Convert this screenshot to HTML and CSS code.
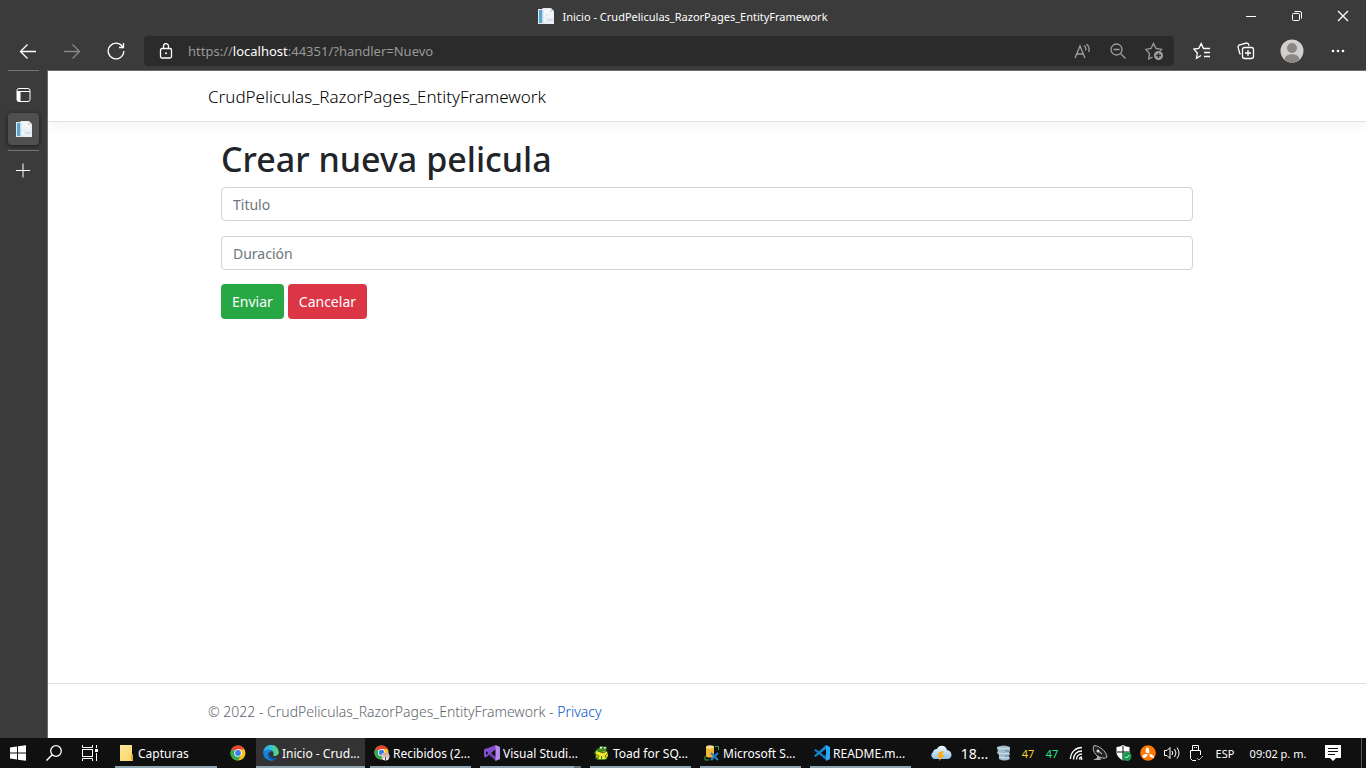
FILE: index.html
```html
<!DOCTYPE html>
<html lang="es">
<head>
<meta charset="utf-8">
<meta name="viewport" content="width=device-width, initial-scale=1">
<title>Inicio - CrudPeliculas_RazorPages_EntityFramework</title>
<link rel="stylesheet" href="styles.css">
</head>
<body>
<svg class="defs" aria-hidden="true">
  <defs>
    <linearGradient id="edgeTop" x1="0" y1="0" x2="1" y2="0"><stop offset="0" stop-color="#2fa8ea"/><stop offset=".5" stop-color="#35c1d0"/><stop offset="1" stop-color="#62d96b"/></linearGradient>
    <linearGradient id="cloud" x1="0" y1="0" x2="0" y2="1"><stop offset="0" stop-color="#f3faff"/><stop offset="1" stop-color="#8ec4ee"/></linearGradient>
    <linearGradient id="folder" x1="0" y1="0" x2="1" y2="1"><stop offset="0" stop-color="#ffe79a"/><stop offset="1" stop-color="#f9d568"/></linearGradient>
    <symbol id="favicon" viewBox="0 0 16 16">
      <path d="M0 1h4l1-1h8l3 3v13H0z" fill="#e6eaee"/>
      <path d="M1 2h3v13H1z" fill="#58a5d2"/>
      <path d="M4 2h1.500v13H4z" fill="#b7dcf0"/>
      <path d="M5.500 1H12l3 3v10H5.500z" fill="#f4f5f6"/>
      <path d="M12 1v3h3" fill="#d2d7dc"/>
      <path d="M7 7h5M7 10h4" stroke="#dde2e7"/>
      <path d="M8 9h8v7H8z" fill="#e8eef5"/>
      <path d="M9 12h6" stroke="#c3cfdb"/>
    </symbol>
    <symbol id="chrome" viewBox="0 0 16 16">
      <circle cx="8" cy="8" r="7.500" fill="#fbc116"/>
      <path d="M8 8 1.500 4.250A7.500 7.500 0 0 1 14.500 4.250H8z" fill="#ea4335"/>
      <path d="M1.500 4.250A7.500 7.500 0 0 0 8 15.500L11.200 9.900 8 8z" fill="#34a853"/>
      <circle cx="8" cy="8" r="3.800" fill="#fff"/>
      <circle cx="8" cy="8" r="2.900" fill="#3b7ded"/>
    </symbol>
  </defs>
</svg>
<div class="window">
  <header class="titlebar">
    <span></span>
    <div class="caption"><svg class="i16"><use href="#favicon"/></svg><span>Inicio - CrudPeliculas_RazorPages_EntityFramework</span></div>
    <div class="controls">
      <button aria-label="Minimizar"><svg class="i12" viewBox="0 0 12 12"><path d="M1 6.500h10" class="w"/></svg></button>
      <button aria-label="Restaurar"><svg class="i12" viewBox="0 0 12 12"><rect x="1.500" y="3.500" width="7" height="7" rx="1" class="w"/><path d="M3.500 1.500H9a1.500 1.500 0 0 1 1.500 1.500v5.500" class="w"/></svg></button>
      <button aria-label="Cerrar"><svg class="i12" viewBox="0 0 12 12"><path d="m1 1 10 10M11 1 1 11" class="w bold"/></svg></button>
    </div>
  </header>

  <nav class="toolbar" aria-label="Navegación">
    <button aria-label="Atrás"><svg class="i18" viewBox="0 0 18 18"><path d="M17 9.500H1.500M8.500 2.500l-7 7 7 7" class="w bold"/></svg></button>
    <button aria-label="Adelante"><svg class="i18 dim" viewBox="0 0 18 18"><path d="M1 9.500h15.500M9.500 2.500l7 7-7 7" class="w bold"/></svg></button>
    <button aria-label="Actualizar"><svg class="i18" viewBox="0 0 18 18"><path d="M15.800 5.200A7.800 7.800 0 1 0 16.800 9M16.500 1v4.500H12" class="w bold"/></svg></button>
    <div class="address">
      <button class="lock" aria-label="Información del sitio"><svg class="i16" viewBox="0 0 16 16"><rect x="2.500" y="5.500" width="11" height="9.500" rx="1.500" class="w bold"/><path d="M5.500 5.500V3.200a2.500 2.500 0 0 1 5 0v2.300" class="w bold"/><circle cx="8" cy="10.300" r="1" fill="#fff"/></svg></button>
      <div class="url" role="textbox" aria-label="Dirección" contenteditable="true" spellcheck="false">https://<b>localhost</b>:44351/?handler=Nuevo</div>
      <button aria-label="Leer en voz alta"><svg class="i16 soft" viewBox="0 0 16 16"><path d="m1 15 5-12 5 12M2.800 11h6.400M10 2.500q2.500 2 1.500 5M12.500 1q4 3.500 2 8" class="w bold"/></svg></button>
      <button aria-label="Zoom"><svg class="i16 soft" viewBox="0 0 16 16"><circle cx="6.500" cy="6.500" r="5.500" class="w bold"/><path d="m10.500 10.500 5 5M3.500 6.500h6" class="w bold"/></svg></button>
      <button aria-label="Agregar a favoritos"><svg class="i18 soft" viewBox="0 0 18 18"><path d="m7.500 15-3.800 2 .8-5.300L.8 7.400 6 6.500 8.500 1.500 11 6.500l5.500.9-1.500 1.500" class="w bold"/><circle cx="13.500" cy="13.500" r="4.500" fill="#fff"/><path d="M13.500 11v5M11 13.500h5" stroke="#2b2b2b" stroke-width="1.300"/></svg></button>
    </div>
    <button class="after" aria-label="Favoritos"><svg class="i18" viewBox="0 0 18 18"><path d="m8 13.500-4.500 2.700.8-5.200L.8 7 5.800 6.300 8.200 1.600l2.300 4.900H17M11 10.500h6M11 14.500h6" class="w bold"/></svg></button>
    <button aria-label="Colecciones"><svg class="i18" viewBox="0 0 18 18"><path d="m3.800 12-1-.3L1 4.800 2 3l7.500-2 2 1 .5 2" class="w bold"/><rect x="5.500" y="5.500" width="11" height="11" rx="2" class="w bold"/><path d="M11 8v6M8 11h6" class="w bold"/></svg></button>
    <button class="profile" aria-label="Perfil"><svg class="i24" viewBox="0 0 24 24"><circle cx="12" cy="12" r="11.500" fill="#d2d0cd"/><circle cx="12" cy="9" r="5" fill="#8b8784"/><path d="M4.500 20.500C5 13.500 19 13.500 19.500 20.500A11.500 11.500 0 0 1 4.500 20.500" fill="#8b8784"/></svg></button>
    <button aria-label="Más"><svg class="i16" viewBox="0 0 16 16" fill="#fff"><circle cx="3" cy="8" r="1.300"/><circle cx="8" cy="8" r="1.300"/><circle cx="13" cy="8" r="1.300"/></svg></button>
  </nav>

  <div class="workspace">
    <aside class="tabs">
      <hr>
      <button class="tab" aria-label="Menú de pestañas"><svg class="i16" viewBox="0 0 16 16"><rect x="1" y="1.500" width="13" height="13" rx="2" class="w"/><path d="M1 4.500h13" class="w"/><path d="M1 4.500h3.500v10H2l-1-1z" fill="#fff"/></svg></button>
      <button class="tab active" aria-label="Inicio"><svg class="i16"><use href="#favicon"/></svg></button>
      <hr>
      <button class="tab add" aria-label="Nueva pestaña"><svg class="i16" viewBox="0 0 16 16"><path d="M7 .500v14M0 7.500h14" class="w"/></svg></button>
    </aside>

    <div class="page">
      <header class="site-header"><div class="container"><a class="brand" href="#">CrudPeliculas_RazorPages_EntityFramework</a></div></header>
      <main class="container">
        <form class="form">
          <h1>Crear nueva pelicula</h1>
          <input class="field" type="text" placeholder="Titulo" aria-label="Titulo">
          <input class="field" type="text" placeholder="Duración" aria-label="Duración">
          <div class="actions"><button class="btn send" type="submit">Enviar</button><button class="btn cancel" type="button">Cancelar</button></div>
        </form>
      </main>
      <footer class="site-footer"><div class="container">© 2022 - CrudPeliculas_RazorPages_EntityFramework - <a href="#">Privacy</a></div></footer>
    </div>
  </div>

  <footer class="taskbar">
    <button class="slot" aria-label="Inicio de Windows"><svg class="i16" viewBox="0 0 16 16" fill="#fff"><path d="M0 2.500 7 1.500v6H0zM8 1.300 16 .2v7.300H8zM0 8.500h7v6l-7-1zM8 8.500h8v7.300l-8-1.100z"/></svg></button>
    <button class="slot" aria-label="Buscar"><svg class="i16" viewBox="0 0 16 16"><circle cx="10" cy="6" r="5.300" class="w bold"/><path d="M6.200 9.800.5 15.500" stroke="#fff" stroke-width="1.500"/></svg></button>
    <button class="slot" aria-label="Vista de tareas"><svg class="i16" viewBox="0 0 16 16"><path d="M.5 0v2.500h10V0M.5 16v-2.500h10V16M14.500 0v3M14.500 8v8" class="w"/><rect x=".5" y="4.500" width="10" height="7" class="w"/><path d="M13 4h3v3h-3z" fill="#fff"/></svg></button>
    <button class="task first"><svg class="i16" viewBox="0 0 16 16"><path d="M1 0h12v9l1 1v6H1z" fill="url(#folder)"/><path d="M12.500 15.500v-5.500h1v5.500z" fill="#ffe79a" stroke="#dcae3a"/></svg><span>Capturas</span></button>
    <button class="slot chrome" aria-label="Chrome"><svg class="i16"><use href="#chrome"/></svg></button>
    <button class="task current"><svg class="i16" viewBox="0 0 16 16"><path d="M.3 8A7.700 7.700 0 0 1 15.800 7c.2 3-2 4-4 4-1.500 0-2-.6-1.500-1.400C11.500 7 8 4 4.500 5.500 2 6.500.7 8 .3 8" fill="url(#edgeTop)"/><path d="M.3 8C1.500 4.500 6.500 3.800 9 6.500 6 6.200 4.800 9 6.500 11.500c1.800 2.500 5 2.700 7.800 1A7.800 7.800 0 0 1 .3 8" fill="#1583d7"/><path d="M6 7.500c-2.500 2-1 7 4.500 7.500 1.500-.3 3-1.300 3.800-2.500-4 1.800-8-.5-8.300-5" fill="#0c529f"/></svg><span>Inicio - Crud...</span></button>
    <button class="task near"><svg class="i16" viewBox="0 0 16 16"><use href="#chrome" width="15" height="15"/><circle cx="11.500" cy="11.500" r="4" fill="#d7c5c2"/><circle cx="11.500" cy="9.500" r="1.800" fill="#e8a385"/><path d="M9 15c0-4 5-4 5 0z" fill="#eee"/><path d="M11.500 12v3" stroke="#46464e"/></svg><span>Recibidos (2...</span></button>
    <button class="task stacked"><svg class="i16" viewBox="0 0 16 16"><path d="M0 4.500 1.800 3.500 12 12v4L0 5.500z" fill="#6b3cb0"/><path d="M0 4.500v7l1.800 1L12 4V0z" fill="#8250ce"/><path d="M2 6v4l2.300-2z" fill="#101010"/><path d="m12 5-4 3 4 3z" fill="#101010"/><path d="m11.500 0 4.500 2v12l-4.500 2z" fill="#b58aef"/></svg><span>Visual Studi...</span></button>
    <button class="task"><svg class="i16" viewBox="0 0 16 16"><path d="m3 4 2-1 1-2h3l1 1 2-1 1 2-1 3 2 4-1 4-3 1H4l-3-2 1-3-2-2z" fill="#3d8b22"/><path d="m2 6 5 1 6-1 1 4-2 4H5l-3-3z" fill="#f4e62c"/><path d="M6 2h2v1.500H6M10 2h1.500v1.500H10" fill="#fff"/><path d="m1 9 4 2-2 3M14 8l-3 3 2 3M4 6l5 2 4-2M7.500 11v3" fill="none" stroke="#4c6b1a"/></svg><span>Toad for SQ...</span></button>
    <button class="task"><svg class="i16" viewBox="0 0 16 16"><path d="M2 2v9c0 2 8 2 8 0V2" fill="#f4b632"/><ellipse cx="6" cy="2" rx="4" ry="1.700" fill="#ffe391"/><path d="M11 1.500h3.500V5M1 11v4h4" fill="none" stroke="#3aa544"/><path d="m7 8 7 7M14 8l-7 7" stroke="#237fc6" stroke-width="2"/></svg><span>Microsoft S...</span></button>
    <button class="task"><svg class="i16" viewBox="0 0 16 16"><path d="M1.500 4 0 5.300 12 15l4-1V13z" fill="#1679bd"/><path d="M0 10.700 1.500 12 13 3.300 12 0z" fill="#1488d1"/><path d="M12 0 16 2v12l-4 2z" fill="#2aa8f2"/><path d="M11.500 4.700 7.200 8l4.300 3.300z" fill="#101010"/></svg><span>README.m...</span></button>

    <div class="tray">
      <span class="weather"><svg class="i22" viewBox="0 0 22 16"><path d="M4 14a4 4 0 0 1-1-7C4 4 6 4 7 4c2-5 9-4 10 1 6 1 6 9 0 9z" fill="url(#cloud)"/><path d="m9 7 5-1-2 4h3l-6 6 1-4H7z" fill="#ffae18"/></svg></span>
      <span class="temp">18...</span>
      <span class="ic"><svg class="i16" viewBox="0 0 16 16"><path d="M1 2q7-3 13 0v4l-1 1 1 2-1 2 1 3q-6 3-11 0v-4L1 8l1-3-1-1z" fill="#a2bdcc"/><path d="M2 3q6 2 11 0M3 8q5 2 10 0M3 12q5 2 10 0" fill="none" stroke="#d3e3eb"/><path d="M9 5h4v2H9M9 10h4v2H9" fill="#7d9fb3"/></svg></span>
      <span class="ic num yellow">47</span>
      <span class="ic num green">47</span>
      <span class="ic"><svg class="i16" viewBox="0 0 16 16"><path d="M2.500 14C2.500 7 8 2.500 14 2.500M5.500 14.500C5.500 9 9 6 14 6M8.500 14.500C8.500 11 11 9 14 9M11.500 14.500c0-1.500 1-2.500 2.500-2.500" class="w bold"/><circle cx="13.500" cy="14" r="1" fill="#fff"/></svg></span>
      <span class="ic"><svg class="i16" viewBox="0 0 16 16"><path d="M5 9v4l-4 2h8l-2-5" fill="#aaa"/><path d="M2 .500C0 4 2 11 10 13q3 1 5-1C14 6 8 1 2 .500z" fill="#222" stroke="#bbb"/><path d="m5 5 5 4" stroke="#ddd"/><circle cx="6" cy="6" r="1.500" fill="#ddd"/></svg></span>
      <span class="ic"><svg class="i16" viewBox="0 0 16 16"><path d="M7 0q3 2 6.500 2v6q-1 5-6.500 7.500Q1.500 13 .5 8V2Q4 2 7 0z" fill="#fff"/><path d="M7 1v14M1 7h12" stroke="#101010"/><circle cx="11" cy="11.500" r="4.500" fill="#139b50"/><path d="m9 11.500 1.500 1.500 3-3" class="w"/></svg></span>
      <span class="ic"><svg class="i16" viewBox="0 0 16 16"><circle cx="8" cy="8" r="7.800" fill="#ff7800"/><path d="M5.500 7.500C5.500 4 6 2.500 7.500 2.500s2 2 1.700 6zM9.500 9c2 0 4.500 1.500 4.500 3s-2 1-4.500-.8zM2.300 10.500C3.500 9.500 6 8.500 8 9.500c-1 1.500-2 3-3.500 3.500-1.500 0-2.200-1.200-2.200-2.500z" fill="#fff"/></svg></span>
      <span class="ic"><svg class="i16" viewBox="0 0 16 16"><path d="M.5 5.500H3l3-3v11l-3-3H.5zM8 6q1.500 2 0 4M10.500 4q3 4 0 8M13 2.500q4 5.500 0 11" class="w"/></svg></span>
      <span class="ic"><svg class="i16" viewBox="0 0 16 16"><path d="M4.500 5V.500h6V5M8 15.500H4.500l-2-2V5.500h10V10M6 2.500h1M8 2.500h1" class="w"/><path d="m9 13 2 2 4-4" fill="none" stroke="#aaa"/></svg></span>
      <span class="lang">ESP</span>
      <time class="clock">09:02 p. m.</time>
      <button class="notice" aria-label="Notificaciones"><svg class="i16" viewBox="0 0 16 16"><path d="M0 0h16v13h-5l-3 3-3-3H0z" fill="#fff"/><path d="M3 3.500h10M3 6.500h10M3 9.500h7" stroke="#101010"/></svg></button>
      <button class="desktop" aria-label="Mostrar escritorio"></button>
    </div>
  </footer>
</div>
</body>
</html>
```

FILE: styles.css
```css
* { box-sizing: border-box; }
body { margin: 0; font-family: "Noto Sans", "Open Sans", sans-serif; font-size: 14px; color: #212529; }
button { display: flex; align-items: center; justify-content: center; padding: 0; border: 0; background: none; color: inherit; font: inherit; }
svg { display: block; flex: none; }
.defs { position: absolute; width: 0; height: 0; }
.w { fill: none; stroke: #fff; }
.bold { stroke-width: 1.3; }
.dim { opacity: .4; }
.soft { opacity: .55; }
.i12 { width: 12px; height: 12px; }
.i16 { width: 16px; height: 16px; }
.i18 { width: 18px; height: 18px; }
.i22 { width: 22px; height: 16px; }
.i24 { width: 24px; height: 24px; }

.window { display: flex; flex-direction: column; height: 100vh; background: #3b3b3b; }
.titlebar { display: grid; grid-template-columns: 1fr auto 1fr; height: 32px; color: #fff; font-size: 11px; }
.caption { display: flex; align-items: center; gap: 8px; white-space: nowrap; }
.controls { display: flex; justify-content: flex-end; }
.controls button { width: 46px; }

.toolbar { display: flex; align-items: center; height: 38px; padding: 0 6px; }
.toolbar button { flex: none; width: 44px; height: 30px; }
.toolbar .address { display: flex; align-items: center; flex: 1; min-width: 0; height: 30px; margin-left: 6px; padding-right: 2px; border-radius: 4px; background: #2b2b2b; }
.toolbar .address button { width: 36px; }
.toolbar .address .lock { width: 44px; }
.url { flex: 1; min-width: 0; overflow: hidden; white-space: nowrap; color: #999; font-size: 13px; outline: 0; }
.url b { color: #fff; font-weight: 400; }
.toolbar .after { margin-left: 6px; }
.toolbar .profile { width: 48px; }

.workspace { display: flex; flex: 1; min-height: 0; }
.tabs { width: 47px; flex: none; padding: 0 8px; }
.tabs hr { height: 1px; margin: 0; border: 0; background: #757575; }
.tab { width: 31px; height: 32px; }
.tab:first-of-type { margin: 8px 0 2px; }
.tab.active { margin-bottom: 5px; border-radius: 4px; background: #505050; box-shadow: 0 1px 4px #1b1b1b; }
.tab.add { margin-top: 4px; }

.page { display: flex; flex: 1; flex-direction: column; min-width: 0; overflow: auto; border: solid #6b6b6b; border-width: 1px 0 0 1px; background: #fff; }
.container { width: 100%; max-width: 1024px; margin: 0 auto; padding: 0 13px; }
.site-header { display: flex; align-items: center; height: 51px; border-bottom: 1px solid #dee2e6; box-shadow: 0 4px 11px rgba(0, 0, 0, .05); }
.brand { color: #000; font-size: 17px; font-weight: 300; text-decoration: none; }
main { flex: 1; }
.form { padding: 16px 13px 0; }
h1 { margin: 0 0 6px; font-size: 34px; font-weight: 500; line-height: 43px; }
.field { display: block; width: 100%; height: 34px; margin-bottom: 15px; padding: 0 11px; border: 1px solid #ced4da; border-radius: 4px; background: #fff; color: #495057; font: inherit; }
.field:last-of-type { margin-bottom: 14px; }
.field::placeholder { color: #6c757d; opacity: 1; }
.actions { display: flex; gap: 4px; }
.btn { height: 35px; padding: 0 11px; border-radius: 4px; color: #fff; }
.send { background: #28a745; }
.cancel { background: #dc3545; }
.site-footer { border-top: 1px solid #dee2e6; color: #5c656d; font-weight: 300; line-height: 56px; height: 55px; }
.site-footer a { color: #0056c6; text-decoration: none; }

.taskbar { display: flex; flex: none; height: 30px; background: #101010; color: #fff; font-size: 12px; white-space: nowrap; }
.slot { width: 36px; }
.slot.chrome { margin-left: 3px; }
.task { justify-content: flex-start; gap: 3px; width: 101px; margin-left: 9px; padding: 2px 4px 0; border: solid #8fa5b2; border-width: 0 0 2px; }
.task.first { width: 102px; margin-left: 7px; }
.task.current { width: 109px; margin-left: 0; padding-left: 7px; background: #333; }
.task.near { margin-left: 5px; }
.task.stacked { border-image: linear-gradient(90deg, #8fa5b2 92%, #66747d 92%) 1; border-width: 0 0 2px; }
.tray { display: flex; margin-left: auto; }
.tray span, .clock { display: flex; align-items: center; justify-content: center; }
.tray .weather { width: 32px; }
.temp { width: 35px; font-size: 14px; }
.ic { width: 24px; }
.num { font-size: 11px; }
.yellow { color: #f6d32b; }
.green { color: #20e887; }
.lang { width: 34px; font-size: 11px; }
.clock { width: 72px; font-size: 11px; }
.notice { width: 38px; }
.desktop { width: 5px; margin-left: 9px; border-left: 1px solid #555; }
```
